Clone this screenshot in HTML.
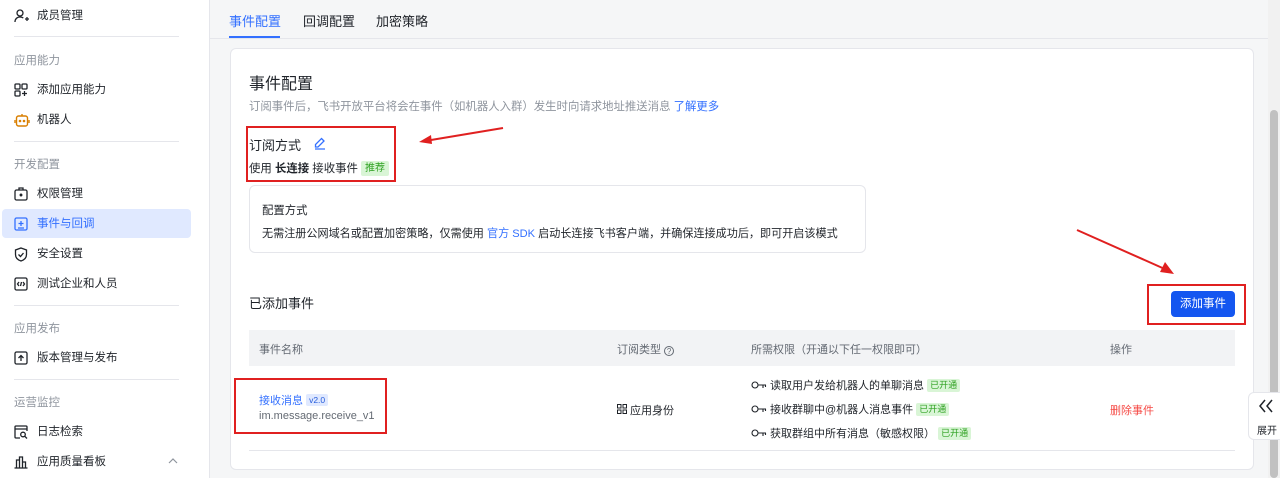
<!DOCTYPE html>
<html><head><meta charset="utf-8"><style>
*{margin:0;padding:0;box-sizing:border-box}
html,body{width:1280px;height:478px;overflow:hidden}
body{background:#f5f6f7;font-family:"Liberation Sans","Noto Sans CJK SC",sans-serif;font-size:11px;color:#1f2329;position:relative}
.a{position:absolute;white-space:nowrap}
#side{position:absolute;left:0;top:0;width:210px;height:478px;background:#fff;border-right:1px solid #e5e6eb}
.it{position:absolute;left:14px;height:20px;width:180px;line-height:20px;font-size:11.5px;color:#1f2329;white-space:nowrap}
.it svg{position:absolute;left:0;top:3px}
.it span{position:absolute;left:23px;white-space:nowrap}
.grp{position:absolute;left:14px;font-size:11.5px;color:#8f959e;white-space:nowrap}
.hr{position:absolute;left:14px;width:165px;height:1px;background:#e5e6eb}
.card{position:absolute;left:230px;top:48px;width:1024px;height:422px;background:#fff;border:1px solid #e5e6eb;border-radius:6px}
.tag{display:inline-block;background:#d9f5d6;color:#2ea121;font-size:9px;padding:0 3px;line-height:13px;border-radius:2px;vertical-align:1px}
.red{position:absolute;border:2px solid #e02020}
.key{display:inline-block;vertical-align:-1px;margin-right:3px}
</style></head><body>
<div id="side">
<div class="it" style="top:6px"><svg width="16" height="14" viewBox="0 0 16 14" fill="none" stroke="#1f2329" stroke-width="1.3"><circle cx="6" cy="4" r="3"/><path d="M1 13c0-3 2-5 5-5 1.5 0 2.5.4 3.3 1M11 10h4M13 8v4"/></svg><span>成员管理</span></div>
<div class="hr" style="top:36px"></div>
<div class="grp" style="top:52px">应用能力</div>
<div class="it" style="top:80px"><svg width="14" height="14" viewBox="0 0 14 14" fill="none" stroke="#1f2329" stroke-width="1.3"><rect x="1" y="1" width="5" height="5" rx="1"/><rect x="8" y="1" width="5" height="5" rx="1"/><rect x="1" y="8" width="5" height="5" rx="1"/><path d="M10.5 8v5M8 10.5h5"/></svg><span>添加应用能力</span></div>
<div class="it" style="top:110px"><svg width="16" height="14" viewBox="0 0 16 14" fill="none" stroke="#d97f00" stroke-width="1.4"><rect x="2.5" y="3" width="11" height="10" rx="2"/><path d="M8 1v2M1 7v3M15 7v3"/><circle cx="6" cy="8" r=".6" fill="#d97f00"/><circle cx="10" cy="8" r=".6" fill="#d97f00"/></svg><span>机器人</span></div>
<div class="hr" style="top:141px"></div>
<div class="grp" style="top:156px">开发配置</div>
<div class="it" style="top:184px"><svg width="14" height="14" viewBox="0 0 14 14" fill="none" stroke="#1f2329" stroke-width="1.3"><rect x="1" y="3" width="12" height="10" rx="1.5"/><path d="M5 3V1h4v2"/><circle cx="7" cy="8" r=".8" fill="#1f2329"/></svg><span>权限管理</span></div>
<div style="position:absolute;left:2px;top:209px;width:189px;height:29px;background:#e0e9ff;border-radius:4px"></div>
<div class="it" style="top:214px;color:#3370ff"><svg width="14" height="14" viewBox="0 0 14 14" fill="none" stroke="#3370ff" stroke-width="1.3"><rect x="1" y="1" width="12" height="12" rx="1.5"/><path d="M7 4v5M4.5 6.5h5M4 11h6"/></svg><span>事件与回调</span></div>
<div class="it" style="top:244px"><svg width="14" height="15" viewBox="0 0 14 15" fill="none" stroke="#1f2329" stroke-width="1.3"><path d="M7 1l5.5 2v4.5C12.5 11 10 13 7 14 4 13 1.5 11 1.5 7.5V3z"/><path d="M4.5 7.5l2 2 3-3.5"/></svg><span>安全设置</span></div>
<div class="it" style="top:274px"><svg width="14" height="14" viewBox="0 0 14 14" fill="none" stroke="#1f2329" stroke-width="1.3"><rect x="1" y="1" width="12" height="12" rx="1.5"/><path d="M5 5L3.5 7 5 9M9 5l1.5 2L9 9M7.5 5l-1 4"/></svg><span>测试企业和人员</span></div>
<div class="hr" style="top:305px"></div>
<div class="grp" style="top:320px">应用发布</div>
<div class="it" style="top:348px"><svg width="14" height="14" viewBox="0 0 14 14" fill="none" stroke="#1f2329" stroke-width="1.3"><rect x="1" y="1" width="12" height="12" rx="1.5"/><path d="M7 10V4.5M4.5 7L7 4.5 9.5 7"/></svg><span>版本管理与发布</span></div>
<div class="hr" style="top:379px"></div>
<div class="grp" style="top:394px">运营监控</div>
<div class="it" style="top:422px"><svg width="14" height="14" viewBox="0 0 14 14" fill="none" stroke="#1f2329" stroke-width="1.3"><path d="M6 13H2a1 1 0 01-1-1V2a1 1 0 011-1h10a1 1 0 011 1v4M1 4h12"/><circle cx="9" cy="9.5" r="2.3"/><path d="M10.7 11.2L13 13.5"/></svg><span>日志检索</span></div>
<div class="it" style="top:452px"><svg width="14" height="14" viewBox="0 0 14 14" fill="none" stroke="#1f2329" stroke-width="1.3"><path d="M0.5 13h13M2.5 13V5h3v8M5.5 13V2h3v11M8.5 13V7h3v6"/></svg><span>应用质量看板</span></div>
<svg class="a" style="left:168px;top:457px" width="10" height="8" viewBox="0 0 10 8" fill="none" stroke="#8f959e" stroke-width="1.2"><path d="M1 6l4-4 4 4"/></svg>
</div>

<div class="a" style="left:229px;top:11px;font-size:13px;color:#3370ff">事件配置</div>
<div class="a" style="left:229px;top:36px;width:51px;height:2px;background:#3370ff"></div>
<div class="a" style="left:303px;top:11px;font-size:13px">回调配置</div>
<div class="a" style="left:376px;top:11px;font-size:13px">加密策略</div>
<div class="a" style="left:210px;top:38px;width:1058px;height:1px;background:#e5e6eb"></div>

<div class="card"></div>
<div class="a" style="left:249px;top:70px;font-size:16px">事件配置</div>
<div class="a" style="left:249px;top:98px;font-size:11.4px;color:#8f959e">订阅事件后，飞书开放平台将会在事件（如机器人入群）发生时向请求地址推送消息 <span style="color:#3370ff">了解更多</span></div>
<div class="a" style="left:249px;top:135px;font-size:13px">订阅方式</div>
<svg class="a" style="left:313px;top:136px" width="14" height="14" viewBox="0 0 14 14" fill="none" stroke="#3370ff" stroke-width="1.3"><path d="M8.5 2.5l2.5 2.5L5 11H2.5V8.5zM2 13h10"/></svg>
<div class="a" style="left:249px;top:160px;font-size:11.4px">使用 <b>长连接</b> 接收事件 <span class="tag" style="font-size:10px;line-height:15px;padding:0 4px">推荐</span></div>
<div class="red" style="left:246px;top:126px;width:150px;height:56px"></div>
<svg class="a" style="left:415px;top:124px" width="90" height="25"><path d="M88 4L10 17" stroke="#e02020" stroke-width="2"/><path d="M4 18l12-7 1 9z" fill="#e02020"/></svg>

<div class="a" style="left:249px;top:185px;width:617px;height:68px;border:1px solid #e5e6eb;border-radius:6px;background:#fff"></div>
<div class="a" style="left:262px;top:202px;font-size:11.4px">配置方式</div>
<div class="a" style="left:262px;top:225px;font-size:11.1px">无需注册公网域名或配置加密策略，仅需使用 <span style="color:#3370ff">官方 SDK</span> 启动长连接飞书客户端，并确保连接成功后，即可开启该模式</div>

<div class="a" style="left:249px;top:293px;font-size:13px">已添加事件</div>
<svg class="a" style="left:1075px;top:228px" width="100" height="48"><path d="M2 2L92 42" stroke="#e02020" stroke-width="2"/><path d="M99 46L85 44l5-10z" fill="#e02020"/></svg>
<div class="red" style="left:1147px;top:284px;width:99px;height:41px"></div>
<div class="a" style="left:1171px;top:291px;width:64px;height:26px;background:#1456f0;border-radius:4px;color:#fff;font-size:11.5px;line-height:26px;text-align:center">添加事件</div>

<div class="a" style="left:249px;top:330px;width:986px;height:36px;background:#f2f3f5"></div>
<div class="a" style="left:259px;top:341px;font-size:11px;color:#646a73">事件名称</div>
<div class="a" style="left:617px;top:341px;font-size:11px;color:#646a73">订阅类型 <span style="display:inline-block;width:10px;height:10px;border:1px solid #646a73;border-radius:50%;font-size:8px;line-height:9px;text-align:center;vertical-align:-1px">?</span></div>
<div class="a" style="left:751px;top:341px;font-size:11px;color:#646a73">所需权限（开通以下任一权限即可）</div>
<div class="a" style="left:1110px;top:341px;font-size:11px;color:#646a73">操作</div>

<div class="red" style="left:234px;top:378px;width:153px;height:56px"></div>
<div class="a" style="left:259px;top:392px;font-size:11px;color:#3370ff">接收消息 <span style="display:inline-block;background:#e0e9ff;color:#245bdb;font-size:8.5px;line-height:12px;padding:0 3px;border-radius:2px;vertical-align:1px">v2.0</span></div>
<div class="a" style="left:259px;top:410px;font-size:11px;color:#646a73">im.message.receive_v1</div>
<div class="a" style="left:617px;top:402px;font-size:11px"><svg width="10" height="10" viewBox="0 0 10 10" fill="none" stroke="#1f2329" stroke-width="1"><rect x=".5" y=".5" width="3.5" height="3.5"/><rect x="6" y=".5" width="3.5" height="3.5"/><rect x=".5" y="6" width="3.5" height="3.5"/><rect x="6" y="6" width="3.5" height="3.5"/></svg> 应用身份</div>
<div class="a" style="left:751px;top:377px;font-size:11px"><svg class="key" width="16" height="9" viewBox="0 0 16 9" fill="none" stroke="#1f2329" stroke-width="1.1"><circle cx="4" cy="4" r="3"/><path d="M7 4h8M12 4v3M14.5 4v2"/></svg>读取用户发给机器人的单聊消息 <span class="tag">已开通</span></div>
<div class="a" style="left:751px;top:401px;font-size:11px"><svg class="key" width="16" height="9" viewBox="0 0 16 9" fill="none" stroke="#1f2329" stroke-width="1.1"><circle cx="4" cy="4" r="3"/><path d="M7 4h8M12 4v3M14.5 4v2"/></svg>接收群聊中@机器人消息事件 <span class="tag">已开通</span></div>
<div class="a" style="left:751px;top:425px;font-size:11px"><svg class="key" width="16" height="9" viewBox="0 0 16 9" fill="none" stroke="#1f2329" stroke-width="1.1"><circle cx="4" cy="4" r="3"/><path d="M7 4h8M12 4v3M14.5 4v2"/></svg>获取群组中所有消息（敏感权限） <span class="tag">已开通</span></div>
<div class="a" style="left:1110px;top:402px;font-size:11px;color:#f54a45">删除事件</div>
<div class="a" style="left:249px;top:450px;width:986px;height:1px;background:#e5e6eb"></div>

<div class="a" style="left:1268px;top:0;width:12px;height:478px;background:#f1f1f1"></div>
<div class="a" style="left:1270px;top:110px;width:8px;height:368px;background:#c1c1c1;border-radius:4px"></div>
<div class="a" style="left:1248px;top:392px;width:40px;height:48px;background:#fff;border:1px solid #e5e6eb;border-radius:6px"></div>
<svg class="a" style="left:1258px;top:399px" width="16" height="14" viewBox="0 0 16 14" fill="none" stroke="#1f2329" stroke-width="1.5"><path d="M7 1L2 7l5 6M14 1L9 7l5 6"/></svg>
<div class="a" style="left:1257px;top:422px;font-size:10px;color:#1f2329">展开</div>
</body></html>
